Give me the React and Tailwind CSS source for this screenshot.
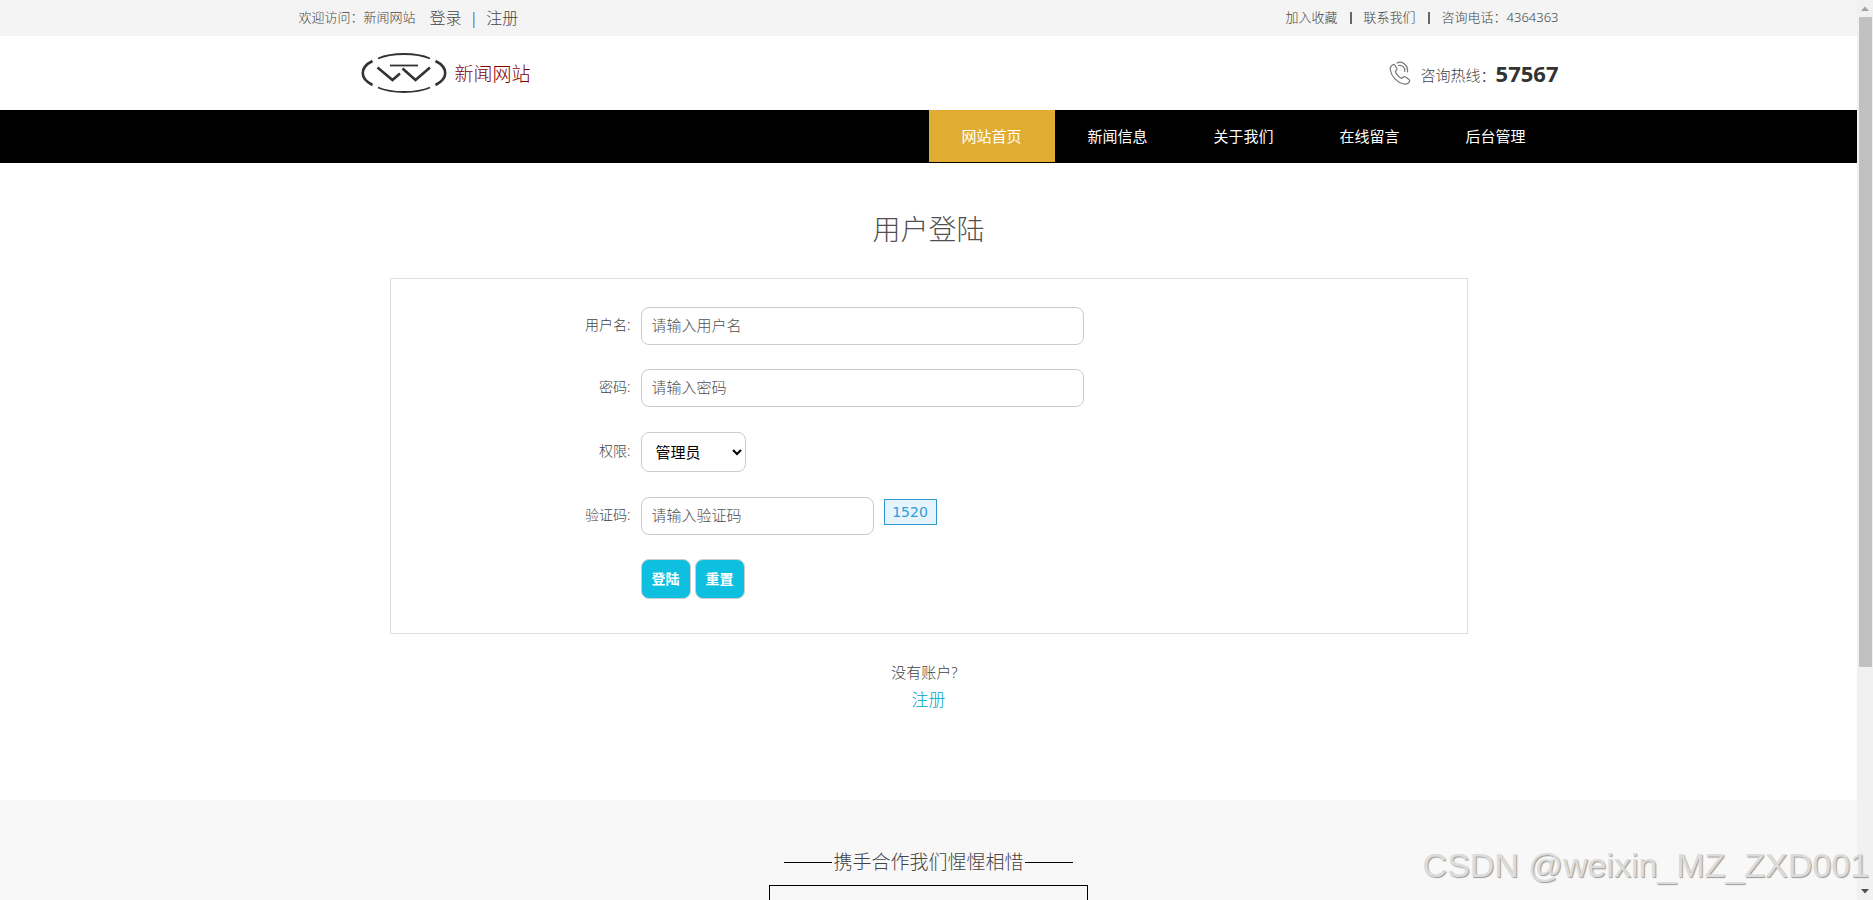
import React, { useState } from 'react';

const NAV_ITEMS = ['网站首页', '新闻信息', '关于我们', '在线留言', '后台管理'];

const ROLES = ['管理员', '注册用户'];

const FIELD = 'h-[38px] max-w-full rounded-lg border border-[#ccc] bg-white px-2.5 pb-0.5 text-[15px] text-[#444] placeholder:text-[#505050]';
const BUTTON = 'h-10 rounded-lg border border-[#ccc] bg-[#0fbfdf] px-2.5 text-sm font-bold text-white';

const Logo = () => (
    <svg viewBox="0 0 86 42" className="h-[42px] w-[86px]" fill="none" stroke="#333" strokeWidth="1.800">
        <path d="M17 6.500 C31 0.500 55 0.500 69 6.500" />
        <path d="M17 35.500 C31 41.500 55 41.500 69 35.500" />
        <path d="M11.500 9 C-1.500 15.500 -1.500 26.500 11.500 33" strokeWidth="2.600" />
        <path d="M74.500 9 C87.500 15.500 87.500 26.500 74.500 33" strokeWidth="2.600" />
        <path d="M29 13.500 H57" />
        <path d="M16.500 15.500 L31.500 28 L39 21.500" strokeWidth="2.600" />
        <path d="M41.500 16.500 L54.500 28 L69 15.500" strokeWidth="2.600" />
    </svg>
);

const PhoneIcon = () => (
    <svg viewBox="0 0 22 24" className="h-6 w-[22px]" fill="none" stroke="#777" strokeWidth="1.200" strokeLinecap="round" strokeLinejoin="round">
        <path d="M4.500 3.500 C2 4.500 0.800 6.500 1.300 9 C2.500 15.500 8 21.500 14.500 23 C17.500 23.500 19.500 22.500 20.500 20.500 C21 19.500 20.500 18.800 19.700 18.200 L16.500 16 C15.500 15.300 14.700 15.500 14 16.200 L12.800 17.500 C9.800 16 7.500 13.500 6.300 10.500 L7.500 9.200 C8.200 8.500 8 7.800 7.500 7 L5.700 4 C5.400 3.500 5 3.300 4.500 3.500 Z" />
        <path d="M8 2 C13 -0.500 19.500 4 18.500 11" />
        <path d="M9.500 4.500 C13 3.500 16.500 6.500 15.800 10.500" />
    </svg>
);

const TopBar = () => (
    <div className="bg-[#f4f4f4]">
        <div className="mx-auto flex h-9 max-w-[1260px] items-center justify-between text-[13px]">
            <div className="flex items-center">
                <span>欢迎访问：新闻网站</span>
                <div className="ml-3.5 flex items-center gap-2 text-base">
                    <a href="#login">登录</a>
                    <span>|</span>
                    <a href="#register">注册</a>
                </div>
            </div>
            <div className="flex items-center gap-3">
                <a href="#favorite">加入收藏</a>
                <span className="h-3 w-0.5 bg-[#666]" />
                <a href="#contact">联系我们</a>
                <span className="h-3 w-0.5 bg-[#666]" />
                <span>咨询电话：4364363</span>
            </div>
        </div>
    </div>
);

const Header = () => (
    <header className="mx-auto flex h-[74px] max-w-[1260px] items-center justify-between">
        <a href="#home" className="ml-[62px] flex items-center gap-2 text-[19px] text-[#800000]">
            <Logo />
            <span className="pt-0.5">新闻网站</span>
        </a>
        <div className="flex items-center">
            <PhoneIcon />
            <span className="ml-2.5 pt-1 text-[15px]">咨询热线：</span>
            <strong className="text-[22px] font-bold text-[#333]">57567</strong>
        </div>
    </header>
);

const NavBar = () => (
    <nav className="bg-black">
        <ul className="mx-auto flex h-[53px] max-w-[1260px] justify-end pb-px">
            {NAV_ITEMS.map((item, i) => (
                <li key={item}>
                    <a
                        href={`#nav-${i}`}
                        className={`flex h-full w-[126px] items-center justify-center text-[15px] font-normal text-white ${i === 0 ? 'bg-[#e0ad32]' : ''}`}
                    >
                        {item}
                    </a>
                </li>
            ))}
        </ul>
    </nav>
);

const Row = ({ label, id, children }) => (
    <div className="flex items-center gap-2.5">
        <label htmlFor={id} className="w-60 shrink-0 pb-0.5 text-right text-sm">{label}</label>
        {children}
    </div>
);

const LoginForm = () => {
    const [role, setRole] = useState(ROLES[0]);

    return (
        <form
            onSubmit={(e) => e.preventDefault()}
            className="mx-auto flex max-w-[1078px] flex-col gap-6 border border-[#ddd] pt-7 pb-[34px]"
        >
            <Row label="用户名:" id="username">
                <input id="username" type="text" placeholder="请输入用户名" className={`${FIELD} w-[443px]`} />
            </Row>
            <Row label="密码:" id="password">
                <input id="password" type="password" placeholder="请输入密码" className={`${FIELD} w-[443px]`} />
            </Row>
            <Row label="权限:" id="role">
                <select
                    id="role"
                    value={role}
                    onChange={(e) => setRole(e.target.value)}
                    className="my-px h-10 w-[105px] rounded-lg border border-[#ccc] bg-white px-2.5 text-[15px] font-normal text-black"
                >
                    {ROLES.map((r) => <option key={r}>{r}</option>)}
                </select>
            </Row>
            <Row label="验证码:" id="captcha">
                <input id="captcha" type="text" placeholder="请输入验证码" className={`${FIELD} w-[233px]`} />
                <span className="mt-0.5 flex h-[26px] w-[53px] items-center justify-center self-start border border-[#2a97d3] bg-[#e6f5fd] font-['DejaVu_Sans'] text-sm font-normal text-[#2f9bd8]">
                    1520
                </span>
            </Row>
            <div className="ml-[250px] flex gap-1">
                <button type="submit" className={BUTTON}>登陆</button>
                <button type="reset" className={BUTTON}>重置</button>
            </div>
        </form>
    );
};

// Window scrollbar at the right-hand edge
const ScrollBar = () => (
    <div className="flex w-4 shrink-0 flex-col items-center justify-between bg-[#f1f1f1]">
        <svg viewBox="0 0 16 17" className="h-[17px] w-4"><path d="M4 11 L8 6.500 L12 11 Z" fill="#a3a3a3" /></svg>
        <div className="w-[13px] grow-[650] bg-[#c1c1c1]" />
        <div className="grow-[216]" />
        <svg viewBox="0 0 16 17" className="h-[17px] w-4"><path d="M4 6 L8 10.500 L12 6 Z" fill="#505050" /></svg>
    </div>
);

const App = () => (
    <div className="relative flex h-screen overflow-hidden bg-white font-['Noto_Sans','Noto_Sans_CJK_SC',sans-serif] font-light text-[#444]">
        <div className="min-w-0 flex-1">
            <TopBar />
            <Header />
            <NavBar />
            <main className="pt-[45px] pb-[86px]">
                <h1 className="mb-7 text-center text-[28px] leading-[42px] font-light text-[#505050]">用户登陆</h1>
                <LoginForm />
                <div className="mt-6 text-center">
                    <p className="pr-2 text-[15px] leading-7">没有账户?</p>
                    <a href="#register" className="text-[17px] leading-7 text-[#00a3c7]">注册</a>
                </div>
            </main>
            <footer className="bg-[#f8f8f8] pt-11 pb-20">
                <div className="flex items-center justify-center text-[19px] leading-9">
                    <span className="h-px w-12 bg-black" />
                    <h2 className="px-px font-light">携手合作我们惺惺相惜</h2>
                    <span className="h-px w-12 bg-black" />
                </div>
                <div className="mx-auto mt-[5px] h-12 w-[319px] border border-black" />
            </footer>
        </div>
        <ScrollBar />
        <div className="absolute right-1 bottom-3 font-['Liberation_Sans',sans-serif] text-[34px] leading-[46px] whitespace-nowrap text-[#dcdcdc] [text-shadow:1px_1px_1px_#999]">
            CSDN @weixin_MZ_ZXD001
        </div>
    </div>
);

export default App;
